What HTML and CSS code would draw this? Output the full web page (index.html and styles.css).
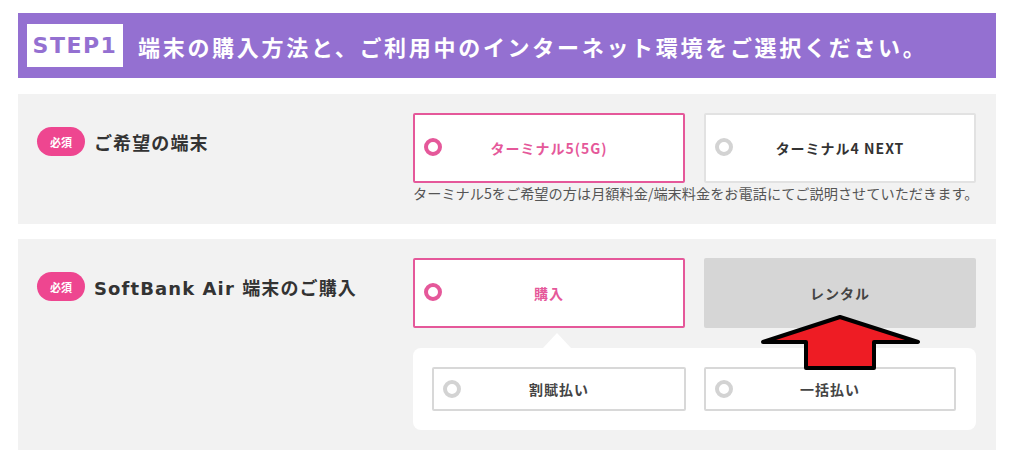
FILE: index.html
```html
<!DOCTYPE html>
<html>

<head>
   <meta charset="utf-8">
   <meta name="viewport" content="width=device-width, initial-scale=1.0">
   <title>STEP1 端末の購入方法</title>
   <link rel="stylesheet" href="styles.css">
</head>

<body>
   <div class="page">
      <div class="step-head">
         <span class="step-no">STEP1</span>
         <h2 class="step-title">端末の購入方法と、ご利用中のインターネット環境をご選択ください。</h2>
      </div>

      <div class="row">
         <div class="row-label">
            <span class="must">必須</span>
            <span class="label-text">ご希望の端末</span>
         </div>
         <div class="row-body">
            <div class="choices">
               <label class="choice is-on"><span class="radio"></span>ターミナル5(5G)</label>
               <label class="choice"><span class="radio"></span>ターミナル4 NEXT</label>
            </div>
            <p class="note">ターミナル5をご希望の方は月額料金/端末料金をお電話にてご説明させていただきます。</p>
         </div>
      </div>

      <div class="row row-buy">
         <div class="row-label">
            <span class="must">必須</span>
            <span class="label-text">SoftBank Air 端末のご購入</span>
         </div>
         <div class="row-body">
            <div class="choices">
               <label class="choice is-on"><span class="radio"></span>購入</label>
               <label class="choice is-plain">レンタル</label>
            </div>
            <div class="sub-panel">
               <label class="sub-choice"><span class="radio"></span>割賦払い</label>
               <label class="sub-choice"><span class="radio"></span>一括払い</label>
            </div>
         </div>

         <!-- 赤い矢印 -->
         <svg class="arrow" width="166" height="64" viewBox="0 0 166 64">
            <polygon points="82,5 160,30 116,30 116,56 48,56 48,30 5,30" fill="#ee1c24" stroke="#000" stroke-width="4" stroke-linejoin="round"/>
         </svg>
      </div>
   </div>
</body>

</html>
```

FILE: styles.css
```css
body {
   margin: 0;
   background: #fff;
   font-family: "Noto Sans CJK JP", "Noto Sans", sans-serif;
   color: #333;
}

.page {
   width: 978px;
   margin-left: 18px;
   padding-top: 13px;
}

/* Step header */
.step-head {
   display: flex;
   align-items: center;
   height: 65px;
   padding-left: 9px;
   background: #9470d1;
   box-sizing: border-box;
}

.step-no {
   display: flex;
   align-items: center;
   justify-content: center;
   width: 96px;
   height: 43px;
   margin-right: 15px;
   background: #fff;
   color: #9470d1;
   font-family: "DejaVu Sans", sans-serif;
   font-weight: bold;
   font-size: 22px;
   letter-spacing: 1.5px;
}

.step-title {
   margin: 0;
   color: #fff;
   font-size: 22px;
   font-weight: bold;
   letter-spacing: 2.7px;
}

/* Rows */
.row {
   position: relative;
   display: flex;
   margin-top: 16px;
   padding: 19px 20px 22px 19px;
   background: #f2f2f2;
}

.row-buy {
   margin-top: 15px;
   padding-bottom: 20px;
}

.row-label {
   display: flex;
   align-items: center;
   align-self: flex-start;
   width: 376px;
   margin-top: 14px;
}

.must {
   display: inline-flex;
   align-items: center;
   justify-content: center;
   width: 48px;
   height: 29px;
   margin-right: 9px;
   border-radius: 15px;
   background: #ee4690;
   color: #fff;
   font-size: 11px;
   font-weight: bold;
}

.label-text {
   font-family: "DejaVu Sans", "Noto Sans CJK JP", sans-serif;
   font-size: 18px;
   font-weight: bold;
   letter-spacing: 1.1px;
   color: #333;
}

.row-body {
   width: 563px;
}

.choices {
   display: grid;
   grid-template-columns: 1fr 1fr;
   gap: 19px;
}

.choice {
   position: relative;
   display: flex;
   align-items: center;
   justify-content: center;
   height: 70px;
   border: 2px solid #e2e2e2;
   border-radius: 2px;
   background: #fff;
   box-sizing: border-box;
   font-size: 14px;
   font-weight: bold;
   letter-spacing: 1px;
   color: #333;
}

.choice .radio {
   position: absolute;
   left: 9px;
   top: 23px;
}

.choice.is-on {
   border-color: #e5589a;
   color: #e5589a;
}

.choice.is-plain {
   border: none;
   background: #d6d6d6;
   font-size: 14px;
   color: #444;
}

.radio {
   display: inline-block;
   width: 18px;
   height: 18px;
   border: 4px solid #d3d3d3;
   border-radius: 50%;
   box-sizing: border-box;
}

.is-on .radio {
   border-color: #e5589a;
}

.note {
   margin: 2px 0 0;
   font-size: 14.2px;
   line-height: 1.2;
   color: #555;
   white-space: nowrap;
}

/* Sub options */
.sub-panel {
   position: relative;
   display: grid;
   grid-template-columns: 254px 252px;
   gap: 18px;
   margin-top: 20px;
   padding: 19px 20px 19px 19px;
   border-radius: 8px;
   background: #fff;
}

.sub-panel::before {
   content: "";
   position: absolute;
   left: 130px;
   top: -15px;
   border-left: 14px solid transparent;
   border-right: 14px solid transparent;
   border-bottom: 15px solid #fff;
}

.sub-choice {
   position: relative;
   display: flex;
   align-items: center;
   justify-content: center;
   height: 44px;
   border: 2px solid #d8d8d8;
   border-radius: 2px;
   box-sizing: border-box;
   font-size: 14px;
   font-weight: bold;
   letter-spacing: 1px;
   color: #444;
}

.sub-choice .radio {
   position: absolute;
   left: 9px;
   top: 11px;
}

.arrow {
   position: absolute;
   left: 740px;
   top: 73px;
}
```
